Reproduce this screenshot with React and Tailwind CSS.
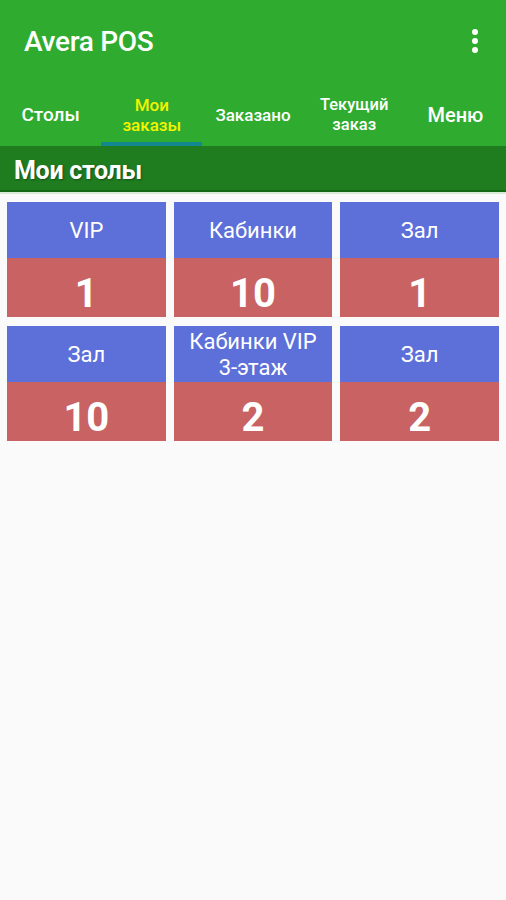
import React, { useState } from 'react';

const tabs = [
  { id: 'tables', label: ['Столы'], size: 'text-[19px]' },
  { id: 'mine', label: ['Мои', 'заказы'], size: 'text-[17px]' },
  { id: 'ordered', label: ['Заказано'], size: 'text-[17px]' },
  { id: 'current', label: ['Текущий', 'заказ'], size: 'text-[16.5px]' },
  { id: 'menu', label: ['Меню'], size: 'text-[20px]' },
];

const tables = [
  { id: 1, hall: ['VIP'], count: 1 },
  { id: 2, hall: ['Кабинки'], count: 10 },
  { id: 3, hall: ['Зал'], count: 1 },
  { id: 4, hall: ['Зал'], count: 10 },
  { id: 5, hall: ['Кабинки VIP', '3-этаж'], count: 2 },
  { id: 6, hall: ['Зал'], count: 2 },
];

const App = () => {
  const [activeTab, setActiveTab] = useState('mine');

  return (
    <div className="min-h-[900px] bg-[#fafafa] font-['Roboto',sans-serif]">
      {/* App bar */}
      <div className="bg-[#2fac2f]">
        <div className="h-[88px] flex items-center justify-between pl-[24px] pr-[28px]">
          <h1 className="text-[28px] font-medium text-white tracking-[-0.3px] pb-[4px]">Avera POS</h1>
          <button className="flex flex-col gap-[3px] items-center pb-[6px]" title="Menu">
            <span className="w-[6px] h-[6px] rounded-full bg-white" />
            <span className="w-[6px] h-[6px] rounded-full bg-white" />
            <span className="w-[6px] h-[6px] rounded-full bg-white" />
          </button>
        </div>
        <div className="flex h-[58px]">
          {tabs.map(tab => (
            <button
              key={tab.id}
              onClick={() => setActiveTab(tab.id)}
              className={`flex-1 flex flex-col ${activeTab === tab.id ? 'text-[#f4f400]' : 'text-white'}`}
            >
              <span className={`flex-1 flex flex-col items-center justify-center leading-[20px] font-medium ${tab.size}`}>
                {tab.label.map(line => (
                  <span key={line}>{line}</span>
                ))}
              </span>
              <span className={`h-[4px] w-full ${activeTab === tab.id ? 'bg-[#13888e]' : 'bg-transparent'}`} />
            </button>
          ))}
        </div>
      </div>

      {/* Section header */}
      <div className="bg-[#1f7c1f] h-[46px] flex items-center px-[14px] border-b-[2px] border-[#136813]">
        <h2 className="text-[25px] font-bold text-white tracking-[-0.3px] pt-[6px] [text-shadow:1px_1px_2px_rgba(0,0,0,0.35)]">Мои столы</h2>
      </div>
      <div className="h-[2px] bg-[#d8ebd8]" />

      {/* Tables grid */}
      <div className="grid grid-cols-3 gap-x-[8px] gap-y-[9px] px-[7px] pt-[8px]">
        {tables.map(t => (
          <div key={t.id} className="flex flex-col">
            <div className="h-[56px] bg-[#5d6fd9] flex flex-col items-center justify-center text-center pt-[2px]">
              {t.hall.map(line => (
                <span key={line} className="text-white text-[22px] leading-[26px] whitespace-nowrap">{line}</span>
              ))}
            </div>
            <div className="h-[59px] bg-[#c96262] flex items-center justify-center pt-[12px]">
              <span className="text-white text-[40px] font-bold leading-none">{t.count}</span>
            </div>
          </div>
        ))}
      </div>
    </div>
  );
};

export default App;
